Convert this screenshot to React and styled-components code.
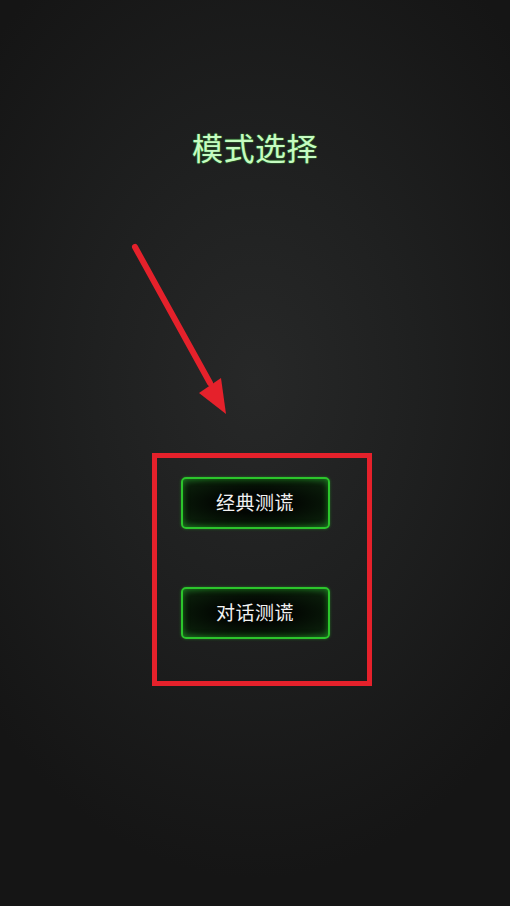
import React from 'react';
import styled, { createGlobalStyle } from 'styled-components';

const GlobalStyle = createGlobalStyle`
  html, body {
    margin: 0;
    padding: 0;
    background: #161616;
  }
  * { box-sizing: border-box; }
`;

const Page = styled.div`
  position: relative;
  width: 510px;
  height: 906px;
  overflow: hidden;
  background: radial-gradient(ellipse 70% 55% at 50% 42%, #272828 0%, #1f2020 45%, #151515 100%);
  font-family: "Noto Sans CJK SC", "Noto Sans", sans-serif;
  display: flex;
  flex-direction: column;
  align-items: center;
  padding-top: 127px;
`;

const Title = styled.h1`
  margin: 0;
  font-size: 31px;
  line-height: 40px;
  font-weight: 400;
  color: #c6fbc2;
  text-shadow: 0 0 1px #3fae3f, 0 0 2px rgba(60, 170, 60, 0.7);
  letter-spacing: 0.5px;
`;

const ButtonList = styled.div`
  margin-top: 310px;
  display: flex;
  flex-direction: column;
  gap: 58px;
`;

const ModeButton = styled.button`
  width: 149px;
  height: 52px;
  border-radius: 5px;
  border: 2px solid #2cc52c;
  background: radial-gradient(ellipse 80% 70% at 50% 50%, #020602 30%, #0a1d0a 75%, #14401a 100%);
  box-shadow: inset 0 0 6px rgba(40, 200, 40, 0.55), 0 0 3px rgba(40, 200, 40, 0.45);
  color: #f2f2f2;
  font-family: "Noto Sans CJK SC", "Noto Sans", sans-serif;
  font-size: 19px;
  font-weight: 400;
  letter-spacing: 0.5px;
  padding: 0 0 4px;
  cursor: pointer;
`;

const Marker = styled.div`
  position: absolute;
  left: 152px;
  top: 453px;
  width: 220px;
  height: 233px;
  border: 5px solid #e5212b;
  pointer-events: none;
`;

const Arrow = styled.svg`
  position: absolute;
  left: 0;
  top: 0;
  pointer-events: none;
`;

export default function App() {
  return (
    <>
      <GlobalStyle />
      <Page>
        <Title>模式选择</Title>
        <ButtonList>
          <ModeButton>经典测谎</ModeButton>
          <ModeButton>对话测谎</ModeButton>
        </ButtonList>
        <Arrow width="510" height="906" viewBox="0 0 510 906">
          <line x1="135" y1="247" x2="210" y2="383" stroke="#e5212b" strokeWidth="6" strokeLinecap="round" />
          <polygon points="199,393 221,378 226,414" fill="#e5212b" />
        </Arrow>
        <Marker />
      </Page>
    </>
  );
}
